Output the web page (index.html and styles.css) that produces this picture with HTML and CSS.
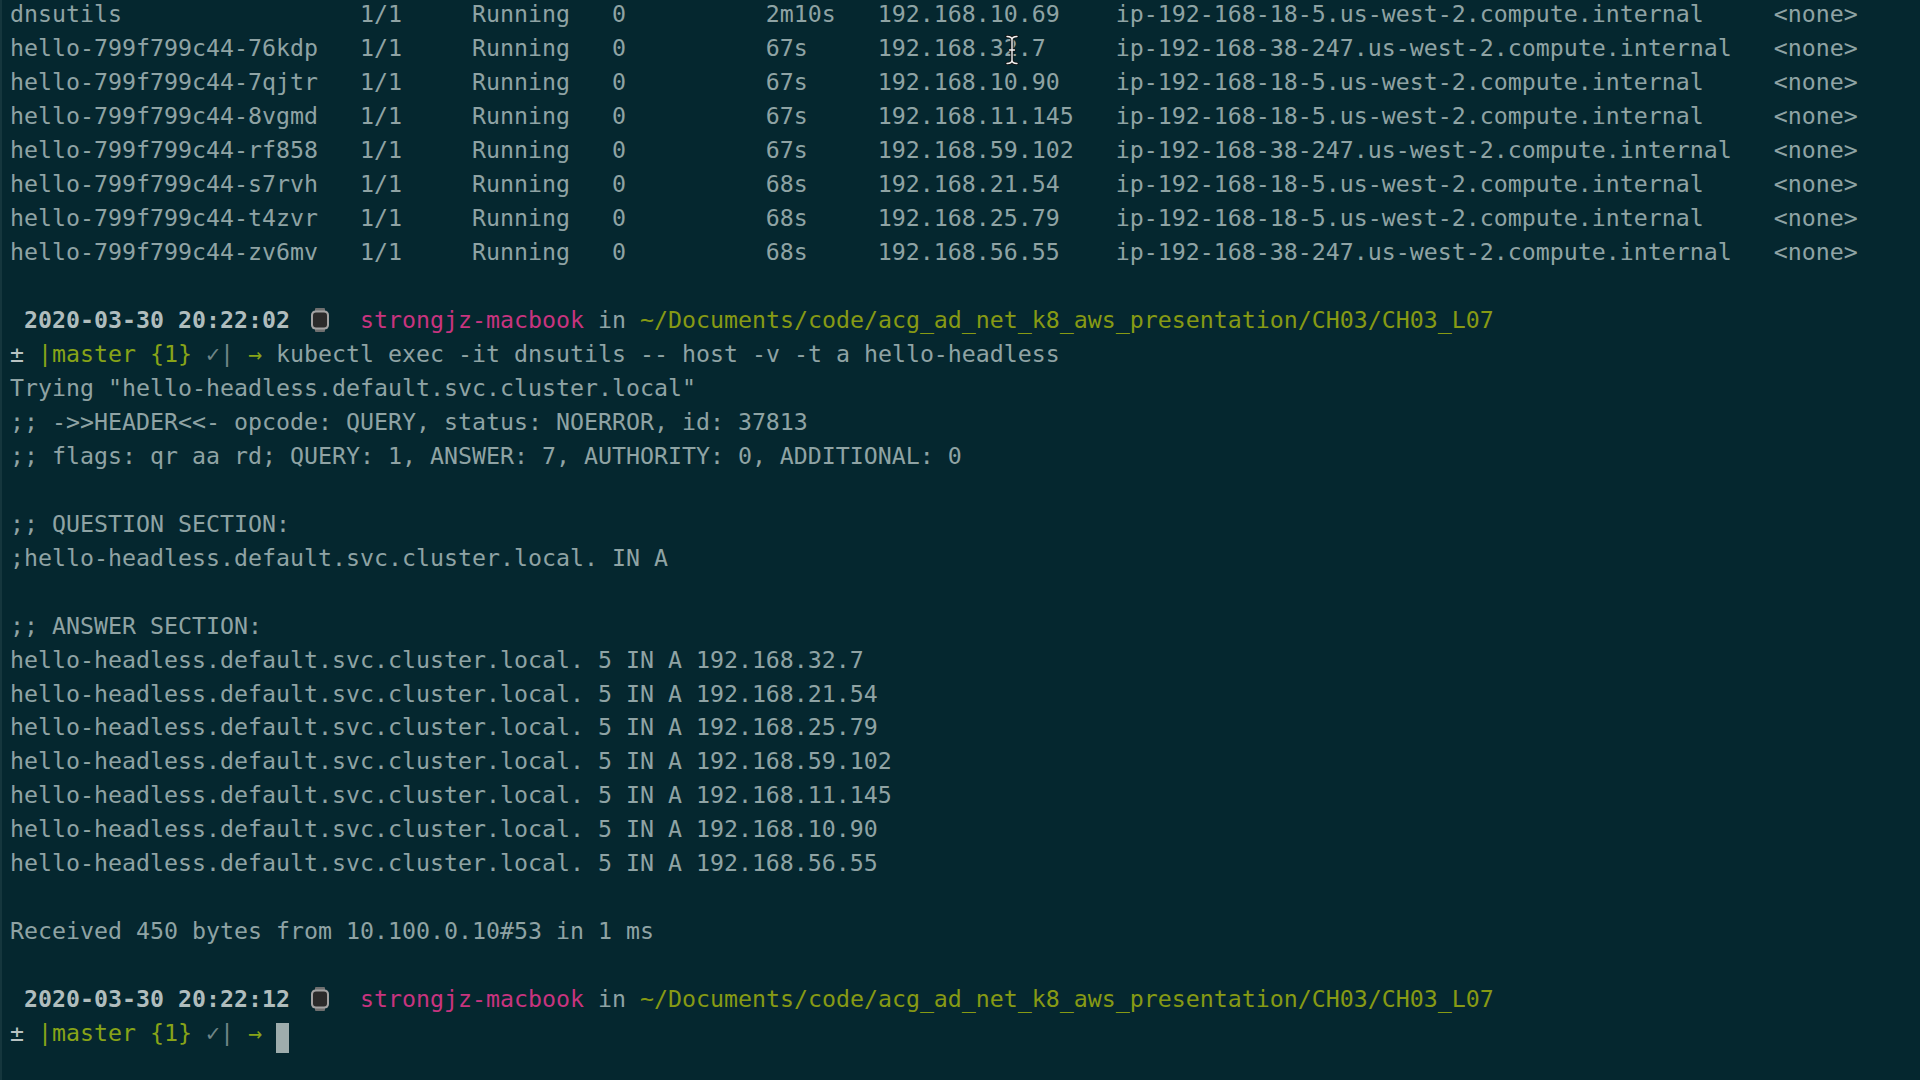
FILE: index.html
```html
<!DOCTYPE html>
<html>
<head>
<meta charset="utf-8">
<link rel="stylesheet" href="styles.css">
</head>
<body>
<div class="term">
  <div class="pods">
    <span>dnsutils</span><span>1/1</span><span>Running</span><span>0</span><span>2m10s</span><span>192.168.10.69</span><span>ip-192-168-18-5.us-west-2.compute.internal</span><span>&lt;none&gt;</span>
    <span>hello-799f799c44-76kdp</span><span>1/1</span><span>Running</span><span>0</span><span>67s</span><span>192.168.32.7</span><span>ip-192-168-38-247.us-west-2.compute.internal</span><span>&lt;none&gt;</span>
    <span>hello-799f799c44-7qjtr</span><span>1/1</span><span>Running</span><span>0</span><span>67s</span><span>192.168.10.90</span><span>ip-192-168-18-5.us-west-2.compute.internal</span><span>&lt;none&gt;</span>
    <span>hello-799f799c44-8vgmd</span><span>1/1</span><span>Running</span><span>0</span><span>67s</span><span>192.168.11.145</span><span>ip-192-168-18-5.us-west-2.compute.internal</span><span>&lt;none&gt;</span>
    <span>hello-799f799c44-rf858</span><span>1/1</span><span>Running</span><span>0</span><span>67s</span><span>192.168.59.102</span><span>ip-192-168-38-247.us-west-2.compute.internal</span><span>&lt;none&gt;</span>
    <span>hello-799f799c44-s7rvh</span><span>1/1</span><span>Running</span><span>0</span><span>68s</span><span>192.168.21.54</span><span>ip-192-168-18-5.us-west-2.compute.internal</span><span>&lt;none&gt;</span>
    <span>hello-799f799c44-t4zvr</span><span>1/1</span><span>Running</span><span>0</span><span>68s</span><span>192.168.25.79</span><span>ip-192-168-18-5.us-west-2.compute.internal</span><span>&lt;none&gt;</span>
    <span>hello-799f799c44-zv6mv</span><span>1/1</span><span>Running</span><span>0</span><span>68s</span><span>192.168.56.55</span><span>ip-192-168-38-247.us-west-2.compute.internal</span><span>&lt;none&gt;</span>
  </div>
  <div class="line"> </div>
  <div class="line"> <span class="date">2020-03-30 20:22:02</span> <span class="icon"><svg width="20" height="24" viewBox="0 0 20 24"><rect x="5" y="0" width="10" height="4" rx="1" fill="#6f6f6f"/><rect x="5" y="20" width="10" height="4" rx="1" fill="#6f6f6f"/><rect x="1" y="2.5" width="18" height="19" rx="4.5" fill="#a3a3a3"/><rect x="3" y="4.5" width="14" height="15" rx="3" fill="#2b2b2b"/></svg></span>  <span class="host">strongjz-macbook</span> in <span class="path">~/Documents/code/acg_ad_net_k8_aws_presentation/CH03/CH03_L07</span></div>
  <div class="line"><span class="pm">±</span> <span class="git">|master {1}</span> <span class="dim">✓|</span> <span class="git">→</span> kubectl exec -it dnsutils -- host -v -t a hello-headless</div>
  <div class="line">Trying "hello-headless.default.svc.cluster.local"</div>
  <div class="line">;; -&gt;&gt;HEADER&lt;&lt;- opcode: QUERY, status: NOERROR, id: 37813</div>
  <div class="line">;; flags: qr aa rd; QUERY: 1, ANSWER: 7, AUTHORITY: 0, ADDITIONAL: 0</div>
  <div class="line"> </div>
  <div class="line">;; QUESTION SECTION:</div>
  <div class="line">;hello-headless.default.svc.cluster.local. IN A</div>
  <div class="line"> </div>
  <div class="line">;; ANSWER SECTION:</div>
  <div class="line">hello-headless.default.svc.cluster.local. 5 IN A 192.168.32.7</div>
  <div class="line">hello-headless.default.svc.cluster.local. 5 IN A 192.168.21.54</div>
  <div class="line">hello-headless.default.svc.cluster.local. 5 IN A 192.168.25.79</div>
  <div class="line">hello-headless.default.svc.cluster.local. 5 IN A 192.168.59.102</div>
  <div class="line">hello-headless.default.svc.cluster.local. 5 IN A 192.168.11.145</div>
  <div class="line">hello-headless.default.svc.cluster.local. 5 IN A 192.168.10.90</div>
  <div class="line">hello-headless.default.svc.cluster.local. 5 IN A 192.168.56.55</div>
  <div class="line"> </div>
  <div class="line">Received 450 bytes from 10.100.0.10#53 in 1 ms</div>
  <div class="line"> </div>
  <div class="line"> <span class="date">2020-03-30 20:22:12</span> <span class="icon"><svg width="20" height="24" viewBox="0 0 20 24"><rect x="5" y="0" width="10" height="4" rx="1" fill="#6f6f6f"/><rect x="5" y="20" width="10" height="4" rx="1" fill="#6f6f6f"/><rect x="1" y="2.5" width="18" height="19" rx="4.5" fill="#a3a3a3"/><rect x="3" y="4.5" width="14" height="15" rx="3" fill="#2b2b2b"/></svg></span>  <span class="host">strongjz-macbook</span> in <span class="path">~/Documents/code/acg_ad_net_k8_aws_presentation/CH03/CH03_L07</span></div>
  <div class="line"><span class="pm">±</span> <span class="git">|master {1}</span> <span class="dim">✓|</span> <span class="git">→</span> <span class="cursor"> </span></div>
</div>
<svg class="ibeam" width="16" height="30" viewBox="0 0 16 30"><path d="M3 1.5 Q8 1.5 8 5 Q8 1.5 13 1.5 M8 5 V25 M3 28.5 Q8 28.5 8 25 Q8 28.5 13 28.5 M5.5 15 H10.5" fill="none" stroke="#111" stroke-width="3.2" stroke-linecap="round"/><path d="M3 1.5 Q8 1.5 8 5 Q8 1.5 13 1.5 M8 5 V25 M3 28.5 Q8 28.5 8 25 Q8 28.5 13 28.5 M5.5 15 H10.5" fill="none" stroke="#f2f2f2" stroke-width="1.4" stroke-linecap="round"/></svg>
</body>
</html>
```
FILE: styles.css
```css
html, body {
  margin: 0;
  padding: 0;
  background: #05272f;
  height: 100%;
  overflow: hidden;
}
body {
  position: relative;
  border-left: 2px solid #15363d;
  box-sizing: border-box;
}
.term {
  font-family: "DejaVu Sans Mono", "Liberation Mono", monospace;
  font-size: 23.25px;
  line-height: 33.98px;
  color: #8fa3a4;
  padding-left: 8px;
  margin-top: -3px;
}
.pods {
  display: grid;
  grid-template-columns: 25ch 8ch 10ch 11ch 8ch 17ch 47ch auto;
  white-space: pre;
}
.line {
  height: 33.98px;
  white-space: pre;
}
.date {
  font-weight: bold;
  color: #b0bdbd;
}
.icon {
  display: inline-block;
  width: 2ch;
  height: 24px;
  vertical-align: -4px;
}
.icon svg {
  display: block;
  margin-left: 6px;
}
.host {
  color: #c8347f;
}
.path {
  color: #879a14;
}
.pm {
  color: #b9c3c3;
}
.git {
  color: #88a418;
}
.dim {
  color: #6f8587;
}
.cursor {
  display: inline-block;
  width: 13px;
  height: 30px;
  background: #9eadad;
  vertical-align: -7px;
}
.ibeam {
  position: absolute;
  left: 1002px;
  top: 35px;
}
```
